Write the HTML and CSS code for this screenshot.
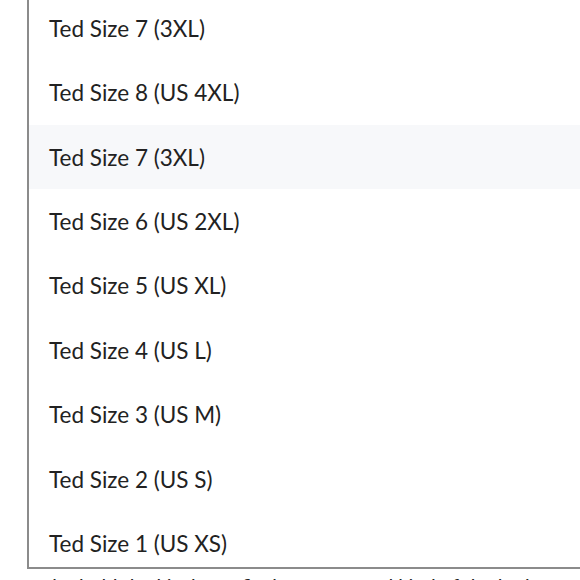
FILE: index.html
```html
<!DOCTYPE html>
<html>
<head>
<meta charset="utf-8">
<link rel="stylesheet" href="styles.css">
</head>
<body>
<div class="page">
  <ul class="list">
    <li class="item">Ted Size 7 (3XL)</li>
    <li class="item">Ted Size 8 (US 4XL)</li>
    <li class="item active">Ted Size 7 (3XL)</li>
    <li class="item">Ted Size 6 (US 2XL)</li>
    <li class="item">Ted Size 5 (US XL)</li>
    <li class="item">Ted Size 4 (US L)</li>
    <li class="item">Ted Size 3 (US M)</li>
    <li class="item">Ted Size 2 (US S)</li>
    <li class="item">Ted Size 1 (US XS)</li>
  </ul>
  <p class="after">the hold the kit the to fit the cotton and kind of the look</p>
</div>
</body>
</html>
```
FILE: styles.css
```css
html, body {
  margin: 0;
  padding: 0;
  background: #ffffff;
}
.page {
  width: 580px;
  height: 580px;
  overflow: hidden;
}
.list {
  list-style: none;
  margin: -3.75px 0 0 27px;
  padding: 0;
  width: 600px;
  height: 570.75px;
  overflow: hidden;
  border-left: 2px solid #8b8b8b;
  border-bottom: 2px solid #8b8b8b;
  font-family: Lato, "Noto Sans", sans-serif;
}
.item {
  height: 64.375px;
  display: flex;
  align-items: center;
  padding-left: 20px;
  font-size: 22.5px;
  font-weight: 400;
  color: #222222;
}
.item.active {
  background: #f7f8fa;
}
.after {
  margin: 6px 0 0 45px;
  font-family: Lato, "Noto Sans", sans-serif;
  font-size: 20px;
  line-height: 20px;
  color: #222222;
  white-space: nowrap;
}
```
